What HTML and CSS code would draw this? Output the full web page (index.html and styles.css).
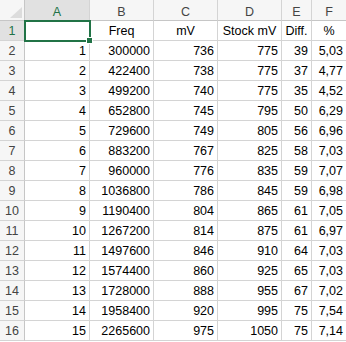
FILE: index.html
```html
<!DOCTYPE html>
<html>
<head>
<meta charset="utf-8">
<link rel="stylesheet" href="styles.css">
</head>
<body>
<div class="sheet">
  <div class="grid">
    <div class="hd corner"><svg class="tri" width="12" height="11" viewBox="0 0 12 11"><polygon points="12,0 12,11 0,11" fill="#dcdcdc"/></svg></div>
    <div class="hd col sel">A</div>
    <div class="hd col">B</div>
    <div class="hd col">C</div>
    <div class="hd col">D</div>
    <div class="hd col">E</div>
    <div class="hd col">F</div>

    <div class="rh sel">1</div><div class="c"></div><div class="c t">Freq</div><div class="c t">mV</div><div class="c t">Stock mV</div><div class="c t">Diff.</div><div class="c t">%</div>
    <div class="rh">2</div><div class="c">1</div><div class="c">300000</div><div class="c">736</div><div class="c">775</div><div class="c">39</div><div class="c">5,03</div>
    <div class="rh">3</div><div class="c">2</div><div class="c">422400</div><div class="c">738</div><div class="c">775</div><div class="c">37</div><div class="c">4,77</div>
    <div class="rh">4</div><div class="c">3</div><div class="c">499200</div><div class="c">740</div><div class="c">775</div><div class="c">35</div><div class="c">4,52</div>
    <div class="rh">5</div><div class="c">4</div><div class="c">652800</div><div class="c">745</div><div class="c">795</div><div class="c">50</div><div class="c">6,29</div>
    <div class="rh">6</div><div class="c">5</div><div class="c">729600</div><div class="c">749</div><div class="c">805</div><div class="c">56</div><div class="c">6,96</div>
    <div class="rh">7</div><div class="c">6</div><div class="c">883200</div><div class="c">767</div><div class="c">825</div><div class="c">58</div><div class="c">7,03</div>
    <div class="rh">8</div><div class="c">7</div><div class="c">960000</div><div class="c">776</div><div class="c">835</div><div class="c">59</div><div class="c">7,07</div>
    <div class="rh">9</div><div class="c">8</div><div class="c">1036800</div><div class="c">786</div><div class="c">845</div><div class="c">59</div><div class="c">6,98</div>
    <div class="rh">10</div><div class="c">9</div><div class="c">1190400</div><div class="c">804</div><div class="c">865</div><div class="c">61</div><div class="c">7,05</div>
    <div class="rh">11</div><div class="c">10</div><div class="c">1267200</div><div class="c">814</div><div class="c">875</div><div class="c">61</div><div class="c">6,97</div>
    <div class="rh">12</div><div class="c">11</div><div class="c">1497600</div><div class="c">846</div><div class="c">910</div><div class="c">64</div><div class="c">7,03</div>
    <div class="rh">13</div><div class="c">12</div><div class="c">1574400</div><div class="c">860</div><div class="c">925</div><div class="c">65</div><div class="c">7,03</div>
    <div class="rh">14</div><div class="c">13</div><div class="c">1728000</div><div class="c">888</div><div class="c">955</div><div class="c">67</div><div class="c">7,02</div>
    <div class="rh">15</div><div class="c">14</div><div class="c">1958400</div><div class="c">920</div><div class="c">995</div><div class="c">75</div><div class="c">7,54</div>
    <div class="rh">16</div><div class="c">15</div><div class="c">2265600</div><div class="c">975</div><div class="c">1050</div><div class="c">75</div><div class="c">7,14</div>
  </div>
  <div class="selbox"></div>
  <div class="handle"></div>
</div>
</body>
</html>
```

FILE: styles.css
```css
html, body {
  margin: 0;
  padding: 0;
  background: #ffffff;
  overflow: hidden;
}
.sheet {
  position: relative;
  width: 346px;
  height: 342px;
  overflow: hidden;
  font-family: "Liberation Sans", Arial, sans-serif;
  font-size: 12.5px;
  color: #000;
}
.grid {
  display: grid;
  grid-template-columns: 25px 65px 64px 64px 64px 30px 35px;
  grid-template-rows: 21px;
  grid-auto-rows: 20px;
  width: 347px;
}
.grid > div {
  box-sizing: border-box;
  border-right: 1px solid #d4d4d4;
  border-bottom: 1px solid #d4d4d4;
  white-space: nowrap;
  overflow: hidden;
}
.hd {
  background: #f6f6f6;
  color: #444;
  text-align: center;
  padding-top: 4px;
  line-height: 16px;
  border-bottom-color: #c6c6c6 !important;
}
.corner {
  position: relative;
  border-right-color: #c6c6c6 !important;
}
.tri {
  position: absolute;
  left: 10px;
  top: 7px;
}
.hd.sel {
  background: #e1e1e1;
  color: #217346;
}
.rh {
  background: #f6f6f6;
  color: #444;
  text-align: center;
  line-height: 20px;
  border-right-color: #c6c6c6 !important;
}
.rh.sel {
  background: #e1e1e1;
  color: #217346;
}
.c {
  text-align: right;
  padding-right: 3px;
  line-height: 20px;
}
.c.t {
  text-align: center;
  padding-right: 0;
}
.selbox {
  position: absolute;
  left: 24px;
  top: 20px;
  width: 67px;
  height: 22px;
  box-sizing: border-box;
  border: 2px solid #217346;
}
.handle {
  position: absolute;
  left: 86px;
  top: 37px;
  width: 5px;
  height: 5px;
  background: #217346;
  border: 1px solid #ffffff;
}
```
